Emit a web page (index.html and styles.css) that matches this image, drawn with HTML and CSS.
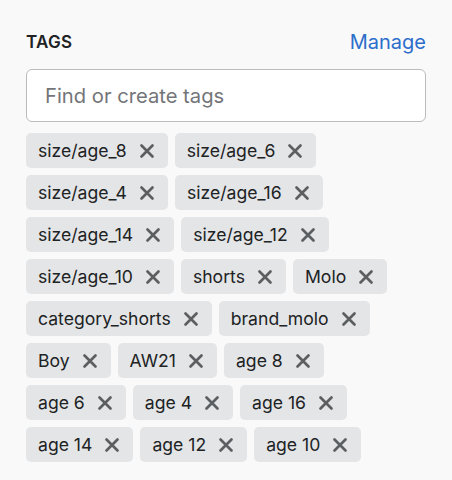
FILE: index.html
```html
<!DOCTYPE html>
<html lang="en">
<head>
  <meta charset="UTF-8">
  <meta name="viewport" content="width=device-width, initial-scale=1">
  <title>Tags</title>
  <link rel="stylesheet" href="styles.css">
</head>
<body>
  <div class="card">
    <div class="card-header">
      <h2>TAGS</h2>
      <a href="#" class="manage">Manage</a>
    </div>
    <input class="tag-input" placeholder="Find or create tags">
    <div class="tag-list" id="tagList"></div>
  </div>
  <script>
    const tags = ["size/age_8", "size/age_6", "size/age_4", "size/age_16", "size/age_14", "size/age_12",
      "size/age_10", "shorts", "Molo", "category_shorts", "brand_molo", "Boy", "AW21", "age 8",
      "age 6", "age 4", "age 16", "age 14", "age 12", "age 10"];

    function renderTags() {
      const list = document.getElementById("tagList");
      tags.forEach(name => {
        const tag = document.createElement("span");
        tag.className = "tag";
        tag.innerHTML = `<span class="tag-name">${name}</span>` +
          `<button class="tag-remove" aria-label="Remove ${name}">` +
          `<svg viewBox="0 0 16 16" width="16" height="16"><path d="M2.5 2.5l11 11M13.5 2.5l-11 11" stroke="currentColor" stroke-width="2.7" stroke-linecap="round"/></svg>` +
          `</button>`;
        list.appendChild(tag);
      });
    }

    renderTags();
  </script>
</body>
</html>
```

FILE: styles.css
```css
body {
  margin: 0;
  background: #f9f9f9;
  font-family: Inter, "Liberation Sans", sans-serif;
  color: #202223;
}
.card {
  padding: 28px 26px 20px 26px;
}
.card-header {
  display: flex;
  justify-content: space-between;
  align-items: center;
  height: 28px;
}
h2 {
  margin: 0;
  font-size: 17px;
  font-weight: 600;
  letter-spacing: 0.3px;
}
.manage {
  color: #2c6ecb;
  text-decoration: none;
  font-size: 20px;
}
.tag-input {
  display: block;
  width: 100%;
  box-sizing: border-box;
  height: 53px;
  margin: 13px 0 11px 0;
  padding: 0 18px;
  border: 1px solid #bbbcbd;
  border-radius: 6px;
  background: #fff;
  font-family: inherit;
  font-size: 20.2px;
}
.tag-input::placeholder {
  color: #737578;
}
.tag-list {
  display: flex;
  flex-wrap: wrap;
  gap: 7px;
}
.tag {
  display: inline-flex;
  align-items: center;
  height: 35px;
  padding: 0 13px 0 12px;
  background: #e4e5e7;
  border-radius: 5px;
  font-size: 17.6px;
}
.tag-remove {
  display: flex;
  margin-left: 12px;
  padding: 0;
  border: none;
  background: none;
  color: #5c5f62;
  cursor: pointer;
}
```
